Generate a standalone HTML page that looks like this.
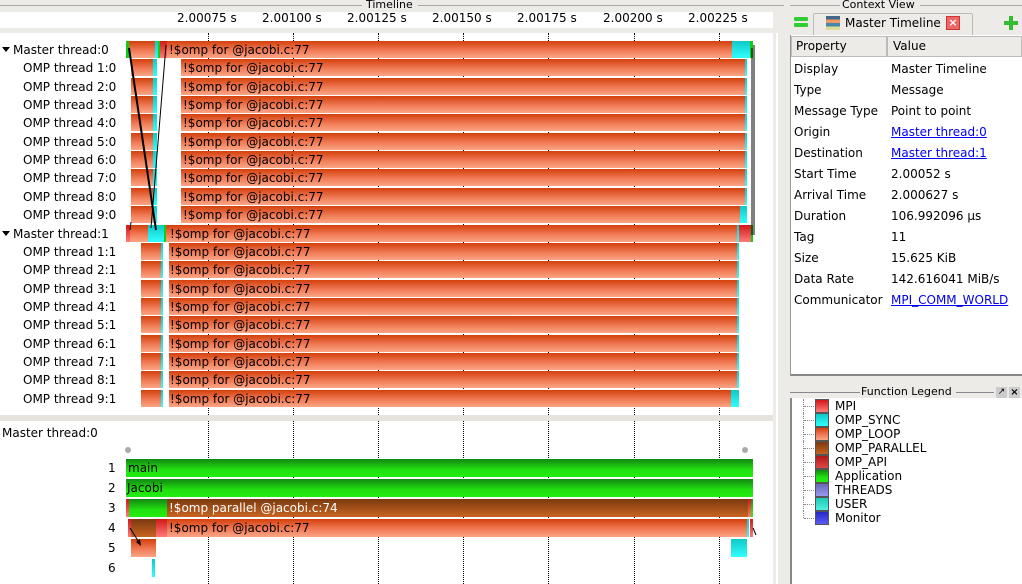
<!DOCTYPE html>
<html><head><meta charset="utf-8"><style>
*{margin:0;padding:0;box-sizing:border-box}
body{width:1022px;height:584px;overflow:hidden;background:#edebe8;font-family:"DejaVu Sans","Liberation Sans",sans-serif;font-size:12px;color:#000;position:relative}
.a{position:absolute}
.lbl{position:absolute;white-space:nowrap;font-size:12px;line-height:14px}
.loop{background:linear-gradient(#d4400c,#f07a55 55%,#fca585)}
.sync{background:linear-gradient(#10c8c8,#30ffff)}
.mpi{background:linear-gradient(#d01818,#ff7a7a)}
.app{background:linear-gradient(#128812,#22e010 60%,#22ee10)}
.par{background:linear-gradient(#7a3a10,#c86420)}
.grid{position:absolute;width:0;border-left:1px dotted #000}
.bt{position:absolute;font-size:12px;line-height:18px;white-space:nowrap;color:#000}
.t td{height:21px;padding-left:4px;white-space:nowrap}
a{color:#0000ee;text-decoration:underline}
</style></head><body>
<!-- Timeline title -->
<div class="a" style="left:0;top:5px;width:362px;border-top:1px solid #aaa"></div>
<div class="lbl" style="left:366px;top:-2px;font-size:11px">Timeline</div>
<div class="a" style="left:418px;top:5px;width:366px;border-top:1px solid #aaa"></div>
<!-- axis -->
<div class="a" style="left:0;top:12px;width:773px;height:16px;background:#fff"></div>
<div class="lbl" style="left:177px;top:11px">2.00075 s</div>
<div class="lbl" style="left:262px;top:11px">2.00100 s</div>
<div class="lbl" style="left:347px;top:11px">2.00125 s</div>
<div class="lbl" style="left:432px;top:11px">2.00150 s</div>
<div class="lbl" style="left:517px;top:11px">2.00175 s</div>
<div class="lbl" style="left:603px;top:11px">2.00200 s</div>
<div class="lbl" style="left:688px;top:11px">2.00225 s</div>
<!-- main area -->
<div class="a" style="left:0;top:33px;width:773px;height:382px;background:#fff"></div>
<div class="a" style="left:0;top:421px;width:773px;height:163px;background:#fff"></div>
<div class="a" style="left:776px;top:33px;width:2px;height:551px;background:#fff"></div>
<div id="tl"></div>
<!-- right panel -->
<div class="a" style="left:790px;top:5px;width:50px;border-top:1px solid #aaa"></div>
<div class="lbl" style="left:842px;top:-2px;font-size:11px">Context View</div>
<div class="a" style="left:920px;top:5px;width:102px;border-top:1px solid #aaa"></div>
<div class="a" style="left:794px;top:17px;width:14px;height:4px;background:#3c3;border-radius:1px"></div>
<div class="a" style="left:794px;top:23px;width:14px;height:4px;background:#3c3;border-radius:1px"></div>
<div class="a" style="left:813px;top:13px;width:160px;height:23px;border:1px solid #bbb;border-bottom:none;background:#edebe8;border-radius:2px 2px 0 0"></div>
<div class="a" style="left:826px;top:16px;width:14px;height:14px;background:linear-gradient(#468 0 25%,#e96 25% 50%,#48a 50% 75%,#dd9 75%)"></div>
<div class="lbl" style="left:845px;top:16px">Master Timeline</div>
<div class="a" style="left:946px;top:16px;width:14px;height:14px;background:#e66;border:1px solid #c33;color:#fff;font-size:11px;line-height:11px;text-align:center;font-weight:bold">×</div>
<div class="a" style="left:1004px;top:21px;width:14px;height:4px;background:#3b3"></div>
<div class="a" style="left:1009px;top:16px;width:4px;height:14px;background:#3b3"></div>
<div class="a" style="left:790px;top:35px;width:232px;height:341px;background:#fff;border-left:1px solid #999;border-bottom:2px solid #888"></div>
<div class="a" style="left:791px;top:36px;width:96px;height:21px;background:#edebe8;border:1px solid #bbb"></div>
<div class="a" style="left:887px;top:36px;width:135px;height:21px;background:#edebe8;border:1px solid #bbb"></div>
<div class="lbl" style="left:796px;top:39px">Property</div>
<div class="lbl" style="left:893px;top:39px">Value</div>
<table class="t a" style="left:790px;top:58px;border-collapse:collapse;font-size:12px">
<tr><td style="width:97px">Display</td><td>Master Timeline</td></tr>
<tr><td>Type</td><td>Message</td></tr>
<tr><td>Message Type</td><td>Point to point</td></tr>
<tr><td>Origin</td><td><a>Master thread:0</a></td></tr>
<tr><td>Destination</td><td><a>Master thread:1</a></td></tr>
<tr><td>Start Time</td><td>2.00052 s</td></tr>
<tr><td>Arrival Time</td><td>2.000627 s</td></tr>
<tr><td>Duration</td><td>106.992096 µs</td></tr>
<tr><td>Tag</td><td>11</td></tr>
<tr><td>Size</td><td>15.625 KiB</td></tr>
<tr><td>Data Rate</td><td>142.616041 MiB/s</td></tr>
<tr><td>Communicator</td><td><a>MPI_COMM_WORLD</a></td></tr>
</table>
<div class="a" style="left:790px;top:392px;width:70px;border-top:1px solid #888"></div>
<div class="lbl" style="left:861px;top:385px;font-size:11px">Function Legend</div>
<div class="a" style="left:956px;top:392px;width:38px;border-top:1px solid #888"></div>
<div class="a" style="left:996px;top:387px;width:11px;height:11px;background:#ccc;font-size:9px;line-height:11px;text-align:center">↗</div>
<div class="a" style="left:1009px;top:387px;width:11px;height:11px;background:#ccc;font-size:10px;line-height:11px;text-align:center;font-weight:bold">×</div>
<div class="a" style="left:790px;top:398px;width:232px;height:186px;background:#fff;border-left:2px solid #888"></div>
<div id="lg"></div>
<script>
var h='';
function d(s){h+=s}
function box(x,y,w,hh,c){d('<div class="a '+c+'" style="left:'+x+'px;top:'+y+'px;width:'+w+'px;height:'+hh+'px"></div>')}
function col(x,y,w,hh,c){d('<div class="a" style="left:'+x+'px;top:'+y+'px;width:'+w+'px;height:'+hh+'px;background:'+c+'"></div>')}
function t(x,y,s){d('<div class="bt" style="left:'+x+'px;top:'+y+'px">'+s+'</div>')}
var grids=[208,293,378,463,548,634,719];
grids.forEach(function(g){d('<div class="grid" style="left:'+g+'px;top:33px;height:382px"></div><div class="grid" style="left:'+g+'px;top:421px;height:163px"></div>')});
var P=18.35,Y0=41;
var L='!$omp for @jacobi.c:77';
for(var i=0;i<20;i++){
 var y=Math.round(Y0+i*P),hh=17;
 var lbl;
 if(i==0)lbl='Master thread:0';else if(i==10)lbl='Master thread:1';else lbl='OMP thread '+(i%10)+':'+(i<10?0:1);
 if(i==0||i==10){d('<div class="a" style="left:2px;top:'+(y+6)+'px;border:4px solid transparent;border-top:5px solid #000;border-bottom:0"></div>');d('<div class="lbl" style="left:13px;top:'+(y+2)+'px">'+lbl+'</div>')}
 else d('<div class="lbl" style="left:23px;top:'+(y+2)+'px">'+lbl+'</div>');
 if(i==0){box(126,y,627,hh,'loop');col(126,y,3,hh,'#1c1');box(155,y,3,hh,'sync');col(158,y,2,hh,'#1c1');box(160,y,7,hh,'mpi');box(732,y,18,hh,'sync');col(750,y,3,hh,'#1c1');t(169,y,L)}
 else if(i<10){box(131,y,22,hh,'loop');box(153,y,4,hh,'sync');box(181,y,566,hh,'loop');if(i==9){box(740,y,7,hh,'sync')}else box(745,y,2,hh,'sync');t(183,y,L)}
 else if(i==10){box(126,y,627,hh,'loop');box(126,y,4,hh,'mpi');box(148,y,16,hh,'sync');col(164,y,2,hh,'#1c1');box(739,y,12,hh,'mpi');col(751,y,2,hh,'#1c1');box(737,y,2,hh,'sync');t(170,y,L)}
 else {box(141,y,20,hh,'loop');box(161,y,2,hh,'sync');box(169,y,570,hh,'loop');if(i==19){box(731,y,8,hh,'sync')}else box(737,y,2,hh,'sync');t(170,y,L)}
}
// message lines
d('<svg class="a" style="left:0;top:0" width="775" height="415"><g stroke="#000" fill="none"><line x1="129" y1="48" x2="156" y2="230" stroke-width="2"/><line x1="166" y1="45" x2="151" y2="228" stroke-width="1"/><line x1="130" y1="230" x2="131" y2="222" stroke-width="1"/><line x1="752" y1="48" x2="752" y2="235" stroke-width="1"/><line x1="754" y1="45" x2="754" y2="235" stroke-width="1"/></g></svg>');
// separator
col(0,415,773,6,'#e6e3df');
d('<div class="lbl" style="left:2px;top:426px">Master thread:0</div>');
d('<div class="a" style="left:125px;top:447px;width:6px;height:6px;border-radius:3px;background:#aaa"></div><div class="a" style="left:742px;top:447px;width:6px;height:6px;border-radius:3px;background:#aaa"></div>');
var ry=[459,479,499,519,539,559];
for(var k=0;k<6;k++)d('<div class="lbl" style="left:108px;top:'+(ry[k]+2)+'px">'+(k+1)+'</div>');
box(126,459,627,18,'app');t(128,459,'main');
box(126,479,627,18,'app');t(127,479,'Jacobi');
box(126,499,627,18,'par');box(126,499,3,18,'mpi');box(129,499,38,18,'app');box(748,499,3,18,'mpi');box(751,499,2,18,'app');d('<div class="bt" style="left:169px;top:499px;color:#fff">!$omp parallel @jacobi.c:74</div>');
box(128,519,620,18,'loop');box(128,519,3,18,'mpi');box(131,519,25,18,'par');box(156,519,11,18,'mpi');box(747,519,2,18,'sync');box(750,519,3,18,'mpi');t(169,519,L);
box(131,539,25,18,'loop');box(731,539,16,18,'sync');
box(152,559,3,18,'sync');
d('<svg class="a" style="left:0;top:0" width="775" height="584"><line x1="130" y1="528" x2="140" y2="544" stroke="#000"/><polygon points="141,546 136,542 140,539" fill="#000"/><line x1="753" y1="528" x2="756" y2="535" stroke="#000"/></svg>');
document.getElementById('tl').innerHTML=h;
var lg=[['MPI','mpi'],['OMP_SYNC','sync'],['OMP_LOOP','loop'],['OMP_PARALLEL','par'],['OMP_API','','linear-gradient(#b01818,#e04848)'],['Application','app'],['THREADS','','linear-gradient(#6868b8,#9898f0)'],['USER','','linear-gradient(#20c8b8,#50f0e0)'],['Monitor','','linear-gradient(#2828c8,#5a5af8)']];
var g='';
lg.forEach(function(e,i){var y=399+i*14;g+='<div class="a" style="left:803px;top:'+y+'px;height:'+(i==8?7:14)+'px;border-left:1px dotted #888"></div><div class="a" style="left:804px;top:'+(y+7)+'px;width:10px;border-top:1px dotted #888"></div><div class="a '+e[1]+'" style="left:815px;top:'+y+'px;width:14px;height:14px;border:1px solid #555;'+(e[2]?'background:'+e[2]:'')+'"></div><div class="lbl" style="left:835px;top:'+y+'px">'+e[0]+'</div>'});
document.getElementById('lg').innerHTML=g;
</script>
</body></html>
